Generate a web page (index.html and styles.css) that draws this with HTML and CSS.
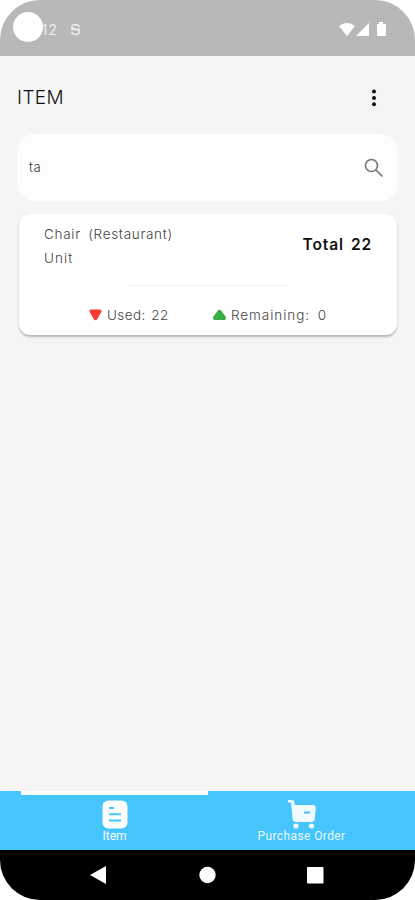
FILE: index.html
```html
<!DOCTYPE html>
<html lang="en">
<head>
<meta charset="utf-8">
<title>Item</title>
<link rel="stylesheet" href="styles.css">
</head>
<body>
<div class="screen">
  <header class="status">
    <span class="camera"></span>
    <span class="time">12</span>
    <svg class="s-icon" width="11" height="13" viewBox="0 0 12 14" fill="none" stroke="#eee" stroke-width="1.7"><path d="M10 4.5C9.500 .5 2 .5 2 4.300c0 3 8 2 8 5.200 0 4-7.500 4-8 .2M1 6.900h10"/></svg>
    <svg class="signals" width="48" height="16" viewBox="0 0 48 16" fill="#fff"><path d="M0 4Q8-2 16 4L8 14zM17 14 30 1v13zM38 2h2V0h4v2h2q1 0 1 1v10q0 1-1 1h-7q-1 0-1-1z"/></svg>
  </header>
  <main class="content">
    <div class="title-row">
      <h1>ITEM</h1>
      <svg width="6" height="18" viewBox="0 0 6 18" fill="#111"><circle cx="3" cy="2.500" r="2"/><circle cx="3" cy="8.900" r="2"/><circle cx="3" cy="15.300" r="2"/></svg>
    </div>
    <div class="search">
      <span class="query">ta</span>
      <svg width="20" height="20" viewBox="0 0 20 20" fill="none" stroke="#777" stroke-width="1.700"><circle cx="7.500" cy="7.500" r="6"/><path d="m12 12 6.500 6.500"/></svg>
    </div>
    <section class="card">
      <div class="card-top">
        <div class="info"><div class="name">Chair (Restaurant)</div><div class="unit">Unit</div></div>
        <div class="total">Total 22</div>
      </div>
      <div class="divider"></div>
      <div class="stats">
        <div class="stat used"><svg width="13" height="12" viewBox="0 0 13 12" fill="#f43b30"><path d="M2 .5h9Q13.500 1 12 3.500L8.300 10Q6.500 12.500 4.700 10L1 3.500Q-.5 1 2 .5z"/></svg><span>Used: 22</span></div>
        <div class="stat remaining"><svg width="13" height="12" viewBox="0 0 13 12" fill="#38ad42"><path d="M2 11h9q3-.5 1.500-3.500L8.500 2Q6.500-.5 4.500 2L.5 7.500Q-1 10.500 2 11z"/></svg><span>Remaining: 0</span></div>
      </div>
    </section>
  </main>
  <nav class="tabs">
    <div class="tab active">
      <svg width="26" height="29" viewBox="0 0 26 29"><rect x=".5" y=".5" width="25" height="28" rx="6" fill="#fff"/><path d="M7 8h5M7 14.300h12M7 20.500h12" stroke="#45c5fc" stroke-width="2"/></svg>
      <span class="item-label">Item</span>
    </div>
    <div class="tab order">
      <svg width="28" height="29" viewBox="0 0 28 29" fill="#eefaff"><path d="M0 0h4q2 0 2.300 2l.4 3H25q3 0 2.800 3l-1 11q-.3 3-3.300 3H8q-3 0-3.400-3L3 2.500H0z"/><circle cx="8" cy="26" r="2.600"/><circle cx="23.500" cy="26" r="2.600"/><path d="M16 12.500h6" stroke="#45c5fc" stroke-width="2"/></svg>
      <span class="order-label">Purchase Order</span>
    </div>
  </nav>
  <footer class="system">
    <svg width="234" height="20" viewBox="0 0 234 20" fill="#fff"><path d="M16 1v18L0 10z"/><circle cx="117.500" cy="10" r="8.200"/><rect x="217" y="2" width="16.500" height="16.500" rx="1"/></svg>
  </footer>
</div>
</body>
</html>
```
FILE: styles.css
```css
* { box-sizing: border-box; }
body { margin: 0; background: #fff; font-family: Inter, "Liberation Sans", sans-serif; }
.screen { width: 415px; height: 900px; border-radius: 40px; overflow: hidden; display: flex; flex-direction: column; background: #f5f5f5; }
.status { height: 56px; flex: none; background: #b8b8b8; display: flex; align-items: center; padding: 3px 28px 0 13px; }
.camera { width: 30px; height: 30px; border-radius: 50%; background: #fff; margin-top: -5px; }
.time { margin-left: -2px; color: #eee; font: 14px/16px Roboto, sans-serif; width: 15px; white-space: nowrap; }
.s-icon { margin-left: 14px; }
.signals { margin-left: auto; }
.content { flex: 1; padding: 0 17px; }
.title-row { height: 78px; display: flex; align-items: center; justify-content: space-between; padding: 5px 21px 0 0; }
h1 { margin: 0; font-size: 19px; line-height: 24px; font-weight: 300; color: #111; letter-spacing: .4px; }
.search { height: 67px; border-radius: 18px; background: #fdfdfd; display: flex; align-items: center; justify-content: space-between; padding: 0 14px 0 12px; }
.query { font-size: 13px; font-weight: 300; color: #333; letter-spacing: .6px; padding-bottom: 1px; }
.card { height: 121px; margin: 13px 1px 0 2px; border-radius: 11px; background: #fff; box-shadow: 0 1.500px 2px rgba(0,0,0,.25); }
.card-top { height: 71px; display: flex; justify-content: space-between; padding: 8px 25px 0; }
.info { font-size: 13.500px; line-height: 24px; font-weight: 300; color: #444; }
.name { letter-spacing: .7px; word-spacing: 3px; }
.unit { letter-spacing: 1.100px; }
.total { font-size: 15.500px; line-height: 24px; font-weight: 600; color: #111; padding-top: 11px; white-space: nowrap; letter-spacing: .9px; word-spacing: 2px; }
.divider { width: 160px; height: 1px; background: #f2f2f2; margin-left: 109px; }
.stats { display: flex; padding: 17px 0 0 70px; }
.stat { display: flex; align-items: center; gap: 5px; font-size: 13.500px; line-height: 24px; font-weight: 300; color: #444; white-space: nowrap; }
.used { width: 124px; letter-spacing: .4px; word-spacing: 1.500px; }
.remaining { letter-spacing: .95px; word-spacing: 3px; }
.tabs { height: 59px; flex: none; display: flex; background: #45c5fc; padding: 0 21px; }
.tab { width: 187px; flex: none; display: flex; flex-direction: column; align-items: center; padding-top: 5px; color: #fff; font: 12px/14px Roboto, sans-serif; border-top: 4px solid transparent; }
.tab svg { flex: none; }
.order-label { letter-spacing: .4px; }
.active { border-top-color: #fff; }
.order { color: #e8f8ff; }
.system { height: 50px; flex: none; background: #000; display: flex; justify-content: center; padding: 15px 2px 0 0; }
```
